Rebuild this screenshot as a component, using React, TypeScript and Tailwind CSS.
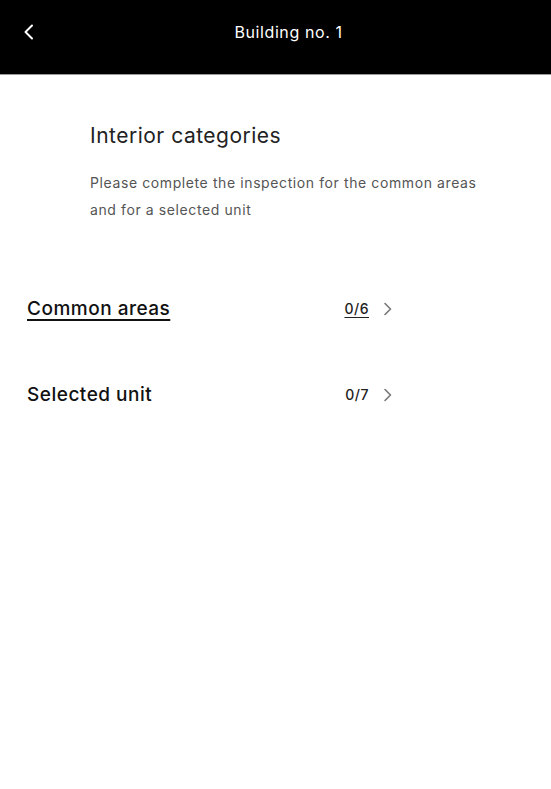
import React from "react";

const Chevron = ({ className }: { className?: string }) => (
  <svg className={className} width="10" height="14" viewBox="0 0 10 14" fill="none">
    <path d="M2 1.5L7.5 7L2 12.5" stroke="currentColor" strokeWidth="1.6" strokeLinecap="round" strokeLinejoin="round" />
  </svg>
);

export default function App() {
  return (
    <div className="min-h-[789px] w-[551px] bg-white" style={{ fontFamily: "Inter, 'Open Sans', sans-serif" }}>
      <header className="relative flex h-[75px] items-center justify-center bg-black border-b border-[#9a9a9a] pl-[26px]">
        <button className="absolute left-[22px] top-[24px] text-white">
          <svg width="14" height="16" viewBox="0 0 14 16" fill="none">
            <path d="M10 1.5L3.5 8L10 14.5" stroke="currentColor" strokeWidth="2" strokeLinecap="round" strokeLinejoin="round" />
          </svg>
        </button>
        <h1 className="mt-[-11px] text-[16px] tracking-[0.6px] text-white">Building no. 1</h1>
      </header>
      <section className="pl-[90px] pr-[10px] pt-[46px]">
        <h2 className="text-[21px] leading-[30px] tracking-[0.5px] text-[#222]">Interior categories</h2>
        <p className="mt-[18px] text-[14px] leading-[27px] tracking-[0.6px] text-[#555]">
          Please complete the inspection for the common areas
          <br />
          and for a selected unit
        </p>
      </section>
      <div className="mt-[64px] pl-[27px] pr-[158px]">
        <div className="flex h-[86px] items-start justify-between pt-[9px]">
          <span className="text-[19px] font-medium leading-[26px] tracking-[0.5px] text-[#111] underline underline-offset-[4px] decoration-[1.5px]">Common areas</span>
          <span className="flex items-center gap-[14px] text-[14px] font-medium leading-[26px] tracking-[0.5px] text-[#222]">
            <span className="underline underline-offset-[3px]">0/6</span>
            <Chevron className="text-[#777]" />
          </span>
        </div>
        <div className="flex items-start justify-between pt-[9px]">
          <span className="text-[19px] font-medium leading-[26px] tracking-[0.5px] text-[#111]">Selected unit</span>
          <span className="flex items-center gap-[14px] text-[14px] font-medium leading-[26px] tracking-[0.5px] text-[#222]">
            <span>0/7</span>
            <Chevron className="text-[#777]" />
          </span>
        </div>
      </div>
    </div>
  );
}
